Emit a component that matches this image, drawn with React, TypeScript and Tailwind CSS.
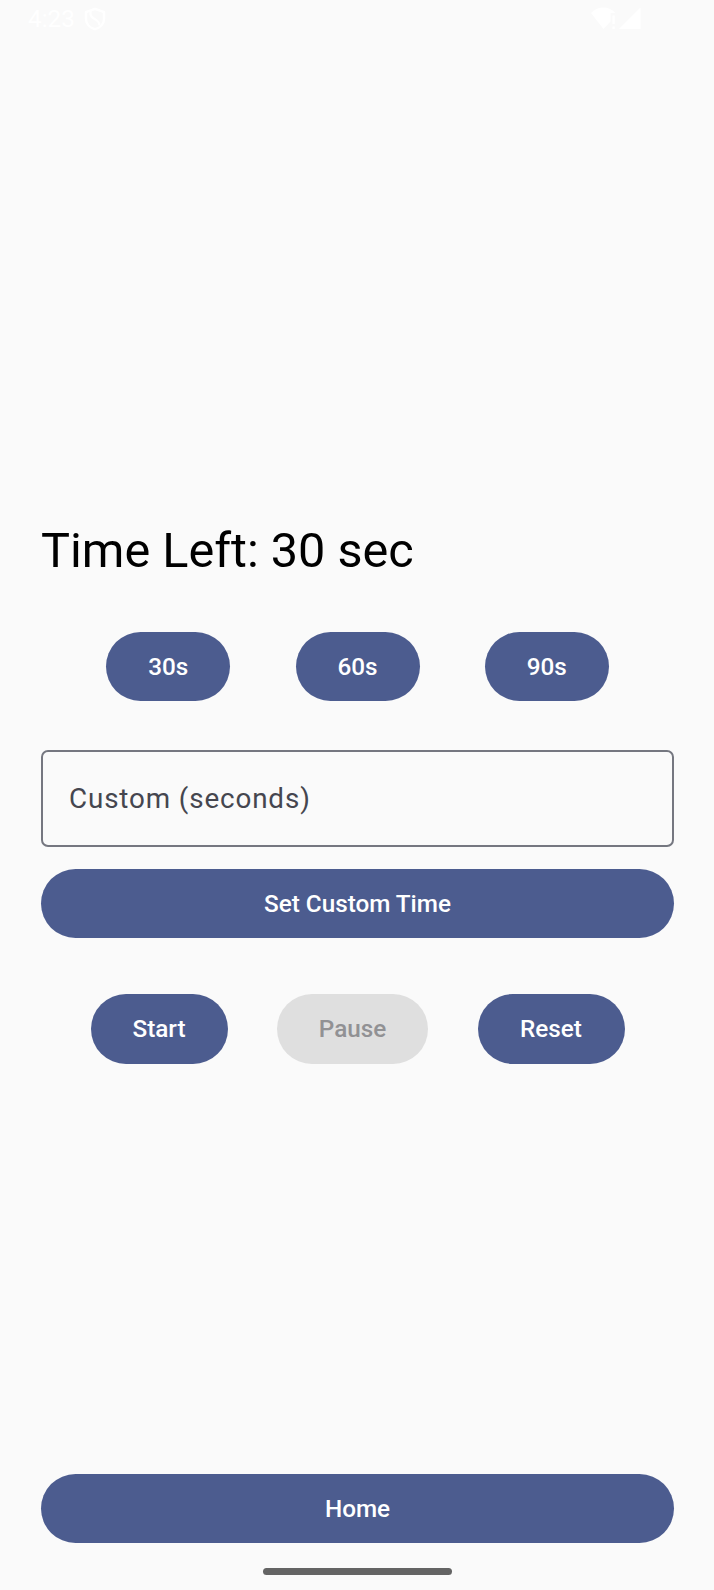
import type { ReactNode } from "react";

function PillButton({
  children,
  className = "",
  disabled = false,
}: {
  children: ReactNode;
  className?: string;
  disabled?: boolean;
}) {
  const tone = disabled ? "bg-[#dfdfdf] text-[#919194]" : "bg-[#4c5c8f] text-white";
  return (
    <button
      type="button"
      disabled={disabled}
      className={`flex shrink-0 items-center justify-center rounded-full text-[24.3px] leading-[34px] font-medium tracking-[-0.02px] ${tone} ${className}`}
    >
      {children}
    </button>
  );
}

function StatusBar() {
  return (
    <header className="flex h-[38px] shrink-0 items-start pr-[73px] pl-[28px] text-white">
      <span className="mt-[4px] text-[24.3px] leading-[29px]">4:23</span>
      <svg className="mt-[7px] ml-[9px]" width="22" height="24" viewBox="0 0 22 24" fill="none" stroke="currentColor">
        <path d="M11 1.800 2 5v7c0 5 4 8.800 9 10.200 5-1.400 9-5.200 9-10.200V5z" strokeWidth="2.400" />
        <path d="M6.500 3.500v3.500c0 5.500 9.500 5 9 11.500" strokeWidth="2.200" />
      </svg>
      <div className="ml-auto flex pt-[7px]">
        <svg width="26" height="22" viewBox="0 0 26 22" fill="currentColor">
          <path d="M0 6C6-1.500 18.500-1.500 24.500 6H19.500V14.500L12.500 22z" />
          <path d="M21.500 8.500h2.300v8.500h-2.300zM21.500 19.500h2.300V22h-2.300z" />
        </svg>
        <svg className="ml-[2px]" width="22" height="22" viewBox="0 0 22 22" fill="currentColor">
          <path d="M0 22 21.500 0.500V22z" />
        </svg>
      </div>
    </header>
  );
}

export default function App() {
  return (
    <div className="flex h-[1590px] w-[714px] flex-col bg-[#fafafa] font-['Roboto',sans-serif]">
      <StatusBar />
      <main className="flex flex-1 flex-col pt-[483px] pr-[40px] pl-[41px]">
        <h1 className="h-[60px] shrink-0 text-[48.6px] leading-[60px] whitespace-nowrap text-black">
          Time Left: 30 sec
        </h1>
        <div className="mt-[51px] flex justify-evenly">
          <PillButton className="h-[69px] w-[124px]">30s</PillButton>
          <PillButton className="h-[69px] w-[124px]">60s</PillButton>
          <PillButton className="h-[69px] w-[124px]">90s</PillButton>
        </div>
        <input
          type="text"
          aria-label="Custom (seconds)"
          placeholder="Custom (seconds)"
          className="mt-[49px] h-[97px] w-full shrink-0 rounded-[7px] border-2 border-[#757780] px-[26px] text-[27.8px] tracking-[0.87px] text-[#45464f] placeholder:text-[#45464f] placeholder:opacity-100"
        />
        <PillButton className="mt-[22px] h-[69px] w-full">Set Custom Time</PillButton>
        <div className="mt-[56px] flex justify-evenly">
          <PillButton className="h-[70px] w-[137px]">Start</PillButton>
          <PillButton className="h-[70px] w-[151px]" disabled>
            Pause
          </PillButton>
          <PillButton className="h-[70px] w-[147px]">Reset</PillButton>
        </div>
        <PillButton className="mt-auto mb-px h-[69px] w-full">Home</PillButton>
      </main>
      <footer className="flex h-[46px] shrink-0 justify-center pt-[24px]">
        <div className="h-[7px] w-[189px] rounded-full bg-[#646464]" />
      </footer>
    </div>
  );
}
